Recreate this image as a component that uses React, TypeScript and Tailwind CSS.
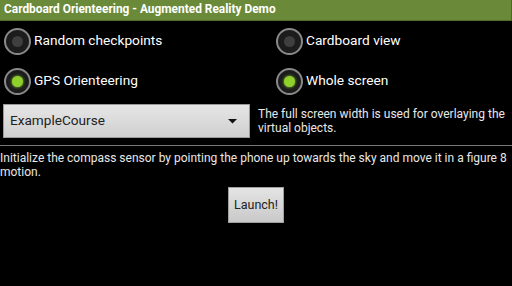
import React from "react";

function Radio({ checked, label }: { checked?: boolean; label: string }) {
  return (
    <div className="flex items-center h-[40px]">
      <div className="w-[27px] h-[27px] rounded-full border-2 border-[#8a8a8a] bg-[#1c1c1c] flex items-center justify-center ml-[4px]">
        {checked ? (
          <div className="w-[11px] h-[11px] rounded-full bg-[#8fd12a] shadow-[0_0_3px_#9be03a]" />
        ) : (
          <div className="w-[11px] h-[11px] rounded-full bg-[#3f3f3f]" />
        )}
      </div>
      <span className="ml-[3px] text-[13.7px] text-white leading-none">{label}</span>
    </div>
  );
}

export default function App() {
  return (
    <div
      className="w-[512px] h-[286px] bg-black text-white overflow-hidden"
      style={{ fontFamily: "Roboto, 'Liberation Sans', sans-serif" }}
    >
      {/* Title bar */}
      <div className="h-[21px] bg-[#6a8a3a] border-b border-[#4e6a28] border-r flex items-center pl-[4px]">
        <span className="text-[11.9px] font-bold text-white leading-none">
          Cardboard Orienteering - Augmented Reality Demo
        </span>
      </div>

      {/* Options */}
      <div className="flex">
        <div className="w-[272px]">
          <Radio label="Random checkpoints" />
          <Radio label="GPS Orienteering" checked />
        </div>
        <div>
          <Radio label="Cardboard view" />
          <Radio label="Whole screen" checked />
        </div>
      </div>

      {/* Spinner + description */}
      <div className="flex items-center mt-[3px]">
        <div className="shrink-0 ml-[3px] w-[247px] h-[34px] bg-gradient-to-b from-[#e6e6e6] to-[#cfcfcf] border border-[#9a9a9a] flex items-center justify-between px-[6px]">
          <span className="text-[13.6px] text-[#222] leading-none">ExampleCourse</span>
          <svg width="9" height="5" viewBox="0 0 9 5" className="mr-[6px]">
            <polygon points="0,0 9,0 4.5,4.5" fill="#111" />
          </svg>
        </div>
        <p className="ml-[8px] text-[12px] leading-[14px] text-[#e8e8e8]">
          The full screen width is used for overlaying the virtual objects.
        </p>
      </div>

      <div className="h-px bg-[#777] mt-[7px]" />

      <p className="mt-[5px] text-[12px] leading-[14px] text-[#e8e8e8]">
        Initialize the compass sensor by pointing the phone up towards the sky and move it in a figure 8 motion.
      </p>

      <div className="flex justify-center mt-[8px]">
        <button className="w-[56px] h-[36px] bg-gradient-to-b from-[#e4e4e4] to-[#c9c9c9] border border-[#a0a0a0] text-[12.5px] text-[#222] leading-none">
          Launch!
        </button>
      </div>
    </div>
  );
}
